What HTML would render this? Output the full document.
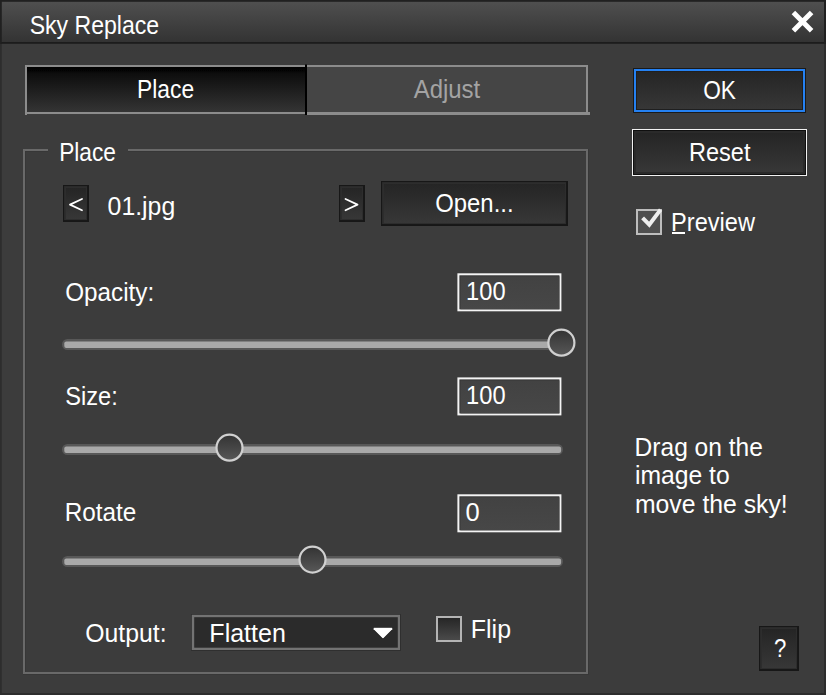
<!DOCTYPE html>
<html><head><meta charset="utf-8"><title>Sky Replace</title>
<style>
html,body{margin:0;padding:0;background:#282828;}
body{width:826px;height:695px;overflow:hidden;}
svg{display:block;font-family:"Liberation Sans",sans-serif;}
</style></head><body>
<svg width="826" height="695" viewBox="0 0 826 695">
<defs>
<linearGradient id="gTitle" x1="0" y1="0" x2="0" y2="1"><stop offset="0" stop-color="#4f4f4f"/><stop offset="1" stop-color="#333333"/></linearGradient>
<linearGradient id="gTab" x1="0" y1="0" x2="0" y2="1"><stop offset="0" stop-color="#020202"/><stop offset="0.1" stop-color="#070707"/><stop offset="0.14" stop-color="#0d0d0d"/><stop offset="1" stop-color="#343434"/></linearGradient>
<linearGradient id="gBtn" x1="0" y1="0" x2="0" y2="1"><stop offset="0" stop-color="#252525"/><stop offset="1" stop-color="#373737"/></linearGradient>
<linearGradient id="gEdit" x1="0" y1="0" x2="0" y2="1"><stop offset="0" stop-color="#424242"/><stop offset="1" stop-color="#474747"/></linearGradient>
<linearGradient id="gThumb" x1="0" y1="0" x2="0" y2="1"><stop offset="0" stop-color="#333333"/><stop offset="1" stop-color="#585858"/></linearGradient>
<linearGradient id="gChk" x1="0" y1="0" x2="0" y2="1"><stop offset="0" stop-color="#262626"/><stop offset="1" stop-color="#4a4a4a"/></linearGradient>
</defs>
<rect x="0" y="0" width="826" height="695" fill="#2d2d2d" />
<rect x="0" y="0" width="826" height="44" fill="#202020" />
<rect x="1.8" y="1.8" width="822.2" height="40.2" fill="url(#gTitle)" />
<rect x="1.8" y="42" width="822.2" height="1.8" fill="#1c1c1c" />
<rect x="1.8" y="43.8" width="822.2" height="649.2" fill="#3c3c3c" />
<path d="M793.4,12.5 L811.6,30.7 M811.6,12.5 L793.4,30.7" stroke="#ffffff" stroke-width="5" fill="none"/>
<rect x="25" y="65" width="563" height="50" fill="#8c8c8c" />
<rect x="27" y="67" width="278" height="45" fill="url(#gTab)" />
<rect x="307" y="67" width="279" height="45" fill="#454545" />
<line x1="28" y1="70.5" x2="304" y2="70.5" stroke="#000000" stroke-opacity="0.7" stroke-width="1" stroke-dasharray="1 1"/>
<rect x="305" y="64.5" width="2" height="50.5" fill="#000000" />
<rect x="307" y="112" width="283" height="3" fill="#8c8c8c" />
<rect x="25" y="114" width="280" height="1" fill="#3d3d3d" />
<rect x="25" y="114" width="2" height="1" fill="#8c8c8c" />
<rect x="25" y="151" width="1" height="521" fill="#373737" />
<rect x="25" y="151" width="23" height="1" fill="#373737" />
<rect x="128" y="151" width="458" height="1" fill="#373737" />
<rect x="588" y="149" width="1" height="526" fill="#373737" />
<rect x="23" y="674" width="566" height="1" fill="#373737" />
<rect x="23" y="149" width="2" height="525" fill="#696969" />
<rect x="586" y="149" width="2" height="525" fill="#696969" />
<rect x="23" y="672" width="565" height="2" fill="#696969" />
<rect x="23" y="149" width="25" height="2" fill="#696969" />
<rect x="128" y="149" width="460" height="2" fill="#696969" />
<rect x="63" y="185" width="26" height="37" fill="#171717" /><rect x="64.1" y="186.1" width="23.0" height="34.0" fill="#2d2d2d" /><rect x="66" y="188" width="20" height="31" fill="url(#gBtn)" />
<rect x="339" y="185" width="26" height="37" fill="#171717" /><rect x="340.1" y="186.1" width="23.0" height="34.0" fill="#2d2d2d" /><rect x="342" y="188" width="20" height="31" fill="url(#gBtn)" />
<rect x="381" y="181" width="187" height="45" fill="#171717" /><rect x="382.1" y="182.1" width="184.0" height="42.0" fill="#2d2d2d" /><rect x="384" y="184" width="181" height="39" fill="url(#gBtn)" />
<rect x="759" y="626" width="40" height="45" fill="#171717" /><rect x="760.1" y="627.1" width="37.0" height="42.0" fill="#2d2d2d" /><rect x="762" y="629" width="34" height="39" fill="url(#gBtn)" />
<path d="M82,199 L70,204.6 L82,210.2" stroke="#ffffff" stroke-width="1.8" fill="none" stroke-linejoin="round" stroke-linecap="round"/>
<path d="M345.5,199 L357.5,204.6 L345.5,210.2" stroke="#ffffff" stroke-width="1.8" fill="none" stroke-linejoin="round" stroke-linecap="round"/>
<rect x="457.4" y="273.3" width="104" height="38" fill="#f4f4f4" />
<rect x="459.4" y="275.3" width="100" height="34" fill="#333333" />
<rect x="460.4" y="276.3" width="99" height="33" fill="url(#gEdit)" />
<rect x="457.4" y="377.4" width="104" height="38" fill="#f4f4f4" />
<rect x="459.4" y="379.4" width="100" height="34" fill="#333333" />
<rect x="460.4" y="380.4" width="99" height="33" fill="url(#gEdit)" />
<rect x="457.4" y="494.3" width="104" height="38" fill="#f4f4f4" />
<rect x="459.4" y="496.3" width="100" height="34" fill="#333333" />
<rect x="460.4" y="497.3" width="99" height="33" fill="url(#gEdit)" />
<rect x="62" y="339" width="501" height="11" rx="5.5" fill="#585858"/>
<rect x="64.3" y="341.4" width="496.8" height="6.6" rx="2" fill="#a9a9a9"/>
<circle cx="561.4" cy="342.7" r="13" fill="url(#gThumb)" stroke="#d0d0d0" stroke-width="2.2"/>
<rect x="62" y="444" width="501" height="11" rx="5.5" fill="#585858"/>
<rect x="64.3" y="446.4" width="496.8" height="6.6" rx="2" fill="#a9a9a9"/>
<circle cx="229.5" cy="447.7" r="13" fill="url(#gThumb)" stroke="#d0d0d0" stroke-width="2.2"/>
<rect x="62" y="556" width="501" height="11" rx="5.5" fill="#585858"/>
<rect x="64.3" y="558.4" width="496.8" height="6.6" rx="2" fill="#a9a9a9"/>
<circle cx="312.5" cy="559.6" r="13" fill="url(#gThumb)" stroke="#d0d0d0" stroke-width="2.2"/>
<rect x="191" y="614" width="210" height="37" fill="#2f2f2f" />
<rect x="191.8" y="614.8" width="208.2" height="35.2" fill="#737373" />
<rect x="194.2" y="617.2" width="203.6" height="30.5" fill="#2b2b2b" />
<path d="M373.6,627.8 L392.3,627.8 L392.3,629.2 L383.3,638.2 L382.6,638.2 L373.6,629.2 Z" fill="#ffffff" stroke="#161616" stroke-width="1.2" paint-order="stroke"/>
<rect x="436" y="616" width="26" height="26" fill="#b4b4b4" />
<rect x="438" y="618" width="22" height="22" fill="url(#gChk)" />
<rect x="633" y="68" width="173" height="45" fill="#1a1a1a" />
<rect x="634" y="69" width="171" height="43" fill="#2581f2" />
<rect x="636" y="71" width="167" height="39" fill="#1f1f1f" />
<rect x="637" y="72" width="165" height="37" fill="url(#gBtn)" />
<rect x="632" y="129" width="175" height="47" fill="#f2f2f2" />
<rect x="633" y="130" width="173" height="45" fill="#0f0f0f" />
<rect x="634" y="131" width="171" height="43" fill="#2a2a2a" />
<rect x="636" y="133" width="167" height="39" fill="url(#gBtn)" />
<rect x="636" y="209" width="26" height="26" fill="#bdbdbd" />
<rect x="638" y="211" width="22" height="22" fill="#4f4f4f" />
<path d="M642.6,217.8 L649.3,224.6 L660.6,209.6" stroke="#eeeeee" stroke-width="4" fill="none" stroke-linejoin="miter"/>
<rect x="672" y="232" width="13" height="2" fill="#ffffff" />
<text transform="translate(29.64,33.60) scale(0.9240,1)" font-size="25" fill="#ffffff">Sky Replace</text>
<text transform="translate(137.03,97.50) scale(0.9125,1)" font-size="25" fill="#ffffff">Place</text>
<text transform="translate(413.65,97.80) scale(0.9588,1)" font-size="25" fill="#a3a3a3">Adjust</text>
<text transform="translate(703.21,98.90) scale(0.9075,1)" font-size="25" fill="#ffffff">OK</text>
<text transform="translate(688.97,160.50) scale(0.9421,1)" font-size="25" fill="#ffffff">Reset</text>
<text transform="translate(671.07,230.90) scale(0.9436,1)" font-size="25" fill="#ffffff">Preview</text>
<text transform="translate(59.14,160.90) scale(0.9091,1)" font-size="25" fill="#ffffff">Place</text>
<text transform="translate(107.61,214.90) scale(0.9924,1)" font-size="25" fill="#ffffff">01.jpg</text>
<text transform="translate(435.25,211.70) scale(0.9554,1)" font-size="25" fill="#ffffff">Open...</text>
<text transform="translate(65.24,300.70) scale(0.9705,1)" font-size="25" fill="#ffffff">Opacity:</text>
<text transform="translate(466.10,300.00) scale(0.9472,1)" font-size="25" fill="#ffffff">100</text>
<text transform="translate(65.31,404.70) scale(0.9453,1)" font-size="25" fill="#ffffff">Size:</text>
<text transform="translate(466.10,404.00) scale(0.9472,1)" font-size="25" fill="#ffffff">100</text>
<text transform="translate(64.71,520.70) scale(0.9730,1)" font-size="25" fill="#ffffff">Rotate</text>
<text transform="translate(465.38,520.70) scale(1.0209,1)" font-size="25" fill="#ffffff">0</text>
<text transform="translate(85.21,641.90) scale(0.9924,1)" font-size="25" fill="#ffffff">Output:</text>
<text transform="translate(209.35,641.90) scale(1.0014,1)" font-size="25" fill="#ffffff">Flatten</text>
<text transform="translate(470.86,637.60) scale(0.9973,1)" font-size="25" fill="#ffffff">Flip</text>
<text transform="translate(634.59,455.70) scale(0.9827,1)" font-size="25" fill="#ffffff">Drag on the</text>
<text transform="translate(634.97,483.60) scale(0.9882,1)" font-size="25" fill="#ffffff">image to</text>
<text transform="translate(634.97,512.50) scale(0.9907,1)" font-size="25" fill="#ffffff">move the sky!</text>
<text transform="translate(773.97,657.20) scale(0.8870,1)" font-size="25" fill="#ffffff">?</text>
</svg>
</body></html>
